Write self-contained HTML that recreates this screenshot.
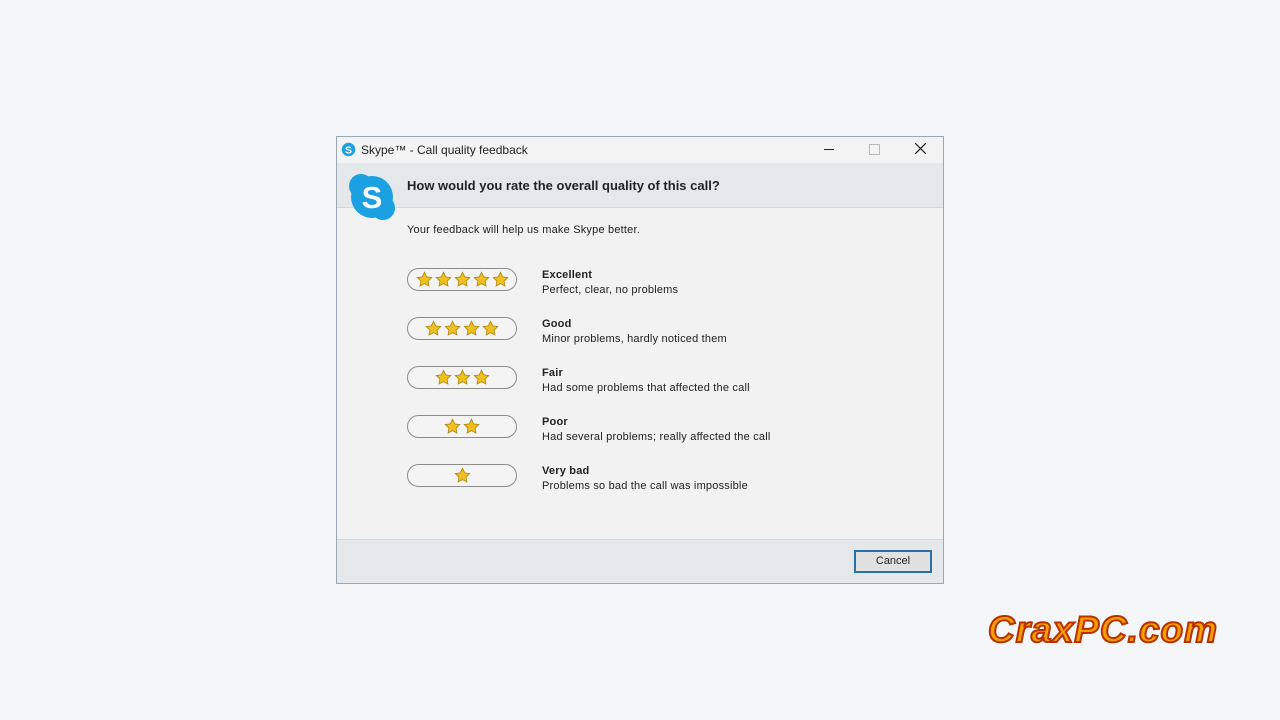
<!DOCTYPE html>
<html><head><meta charset="utf-8"><style>
body{margin:0;width:1280px;height:720px;background:#f5f6f8;font-family:"Liberation Sans",sans-serif;position:relative;overflow:hidden}
.a{position:absolute}
.win{left:336px;top:136px;width:606px;height:446px;border:1px solid #9aa7b5;background:#f2f2f2;overflow:hidden}
.title{left:0;top:0;width:606px;height:26px;background:#f3f3f3;font-size:12px;color:#222}
.hdr{left:0;top:26px;width:606px;height:44px;background:#e5e8eb;border-bottom:1px solid #d6d9dc}
.ftr{left:0;top:402px;width:606px;height:44px;background:#e5e8eb;border-top:1px solid #d6d9dc}
.pill{width:108px;height:21px;border:1px solid #8c8c8c;border-radius:12px;background:#f4f4f4;display:flex;justify-content:center;align-items:center;gap:2px}
.pill svg{width:17px;height:17px}
.lab{font-size:11px;color:#222;line-height:15px;letter-spacing:0.2px}
.lab b{display:block}
</style></head><body>
<svg width="0" height="0" style="position:absolute"><defs><symbol id="st" viewBox="0 0 20 20"><path d="M10 1.5l2.6 5.4 5.9.8-4.3 4.1 1 5.8L10 14.8l-5.2 2.8 1-5.8L1.5 7.7l5.9-.8z" fill="#f0c020" stroke="#b08a10" stroke-width="1"/></symbol></defs></svg>
<div class="a win">
 <div class="a title">
  <svg class="a" style="left:4px;top:5px" width="15" height="15" viewBox="0 0 20 20"><circle cx="10" cy="10" r="9" fill="#1ba0e1"/><text x="10" y="15" font-size="14" font-weight="bold" fill="#fff" text-anchor="middle" font-family="Liberation Sans">S</text></svg>
  <div class="a" style="left:24px;top:6px">Skype™ - Call quality feedback</div>
  <div class="a" style="left:487px;top:12px;width:10px;height:1px;background:#222"></div>
  <div class="a" style="left:532px;top:7px;width:9px;height:9px;border:1px solid #bbb"></div>
  <svg class="a" style="left:578px;top:6px" width="11" height="11"><path d="M0 0L11 11M11 0L0 11" stroke="#222" stroke-width="1.2"/></svg>
 </div>
 <div class="a hdr"><div class="a" style="left:70px;top:15px;font-size:13px;font-weight:bold;color:#222">How would you rate the overall quality of this call?</div></div>
 <svg class="a" style="left:10px;top:35px" width="50" height="50" viewBox="0 0 50 50"><circle cx="14" cy="14" r="12" fill="#1ba0e1"/><circle cx="36" cy="36" r="12" fill="#1ba0e1"/><circle cx="25" cy="25" r="21" fill="#1ba0e1"/><text x="25" y="36" font-size="31" font-weight="bold" fill="#fff" text-anchor="middle" font-family="Liberation Sans">S</text></svg>
 <div class="a" style="left:70px;top:87px;font-size:11px;color:#222;letter-spacing:0.2px">Your feedback will help us make Skype better.</div>

 <div class="a pill" style="left:70px;top:131px"><svg><use href="#st"/></svg><svg><use href="#st"/></svg><svg><use href="#st"/></svg><svg><use href="#st"/></svg><svg><use href="#st"/></svg></div>
 <div class="a lab" style="left:205px;top:131px"><b>Excellent</b>Perfect, clear, no problems</div>
 <div class="a pill" style="left:70px;top:180px"><svg><use href="#st"/></svg><svg><use href="#st"/></svg><svg><use href="#st"/></svg><svg><use href="#st"/></svg></div>
 <div class="a lab" style="left:205px;top:180px"><b>Good</b>Minor problems, hardly noticed them</div>
 <div class="a pill" style="left:70px;top:229px"><svg><use href="#st"/></svg><svg><use href="#st"/></svg><svg><use href="#st"/></svg></div>
 <div class="a lab" style="left:205px;top:229px"><b>Fair</b>Had some problems that affected the call</div>
 <div class="a pill" style="left:70px;top:278px"><svg><use href="#st"/></svg><svg><use href="#st"/></svg></div>
 <div class="a lab" style="left:205px;top:278px"><b>Poor</b>Had several problems; really affected the call</div>
 <div class="a pill" style="left:70px;top:327px"><svg><use href="#st"/></svg></div>
 <div class="a lab" style="left:205px;top:327px"><b>Very bad</b>Problems so bad the call was impossible</div>

 <div class="a ftr"><div class="a" style="left:517px;top:10px;width:74px;height:19px;border:2px solid #2b6ea8;background:#e1e1e1;font-size:11px;text-align:center;line-height:19px;color:#222">Cancel</div></div>
</div>
<div class="a" style="left:988px;top:609px;font-size:37px;font-weight:bold;font-style:italic;color:#f5a000;-webkit-text-stroke:2px #b83000;letter-spacing:1px;font-family:'Liberation Sans',sans-serif">CraxPC.com</div>
</body></html>
